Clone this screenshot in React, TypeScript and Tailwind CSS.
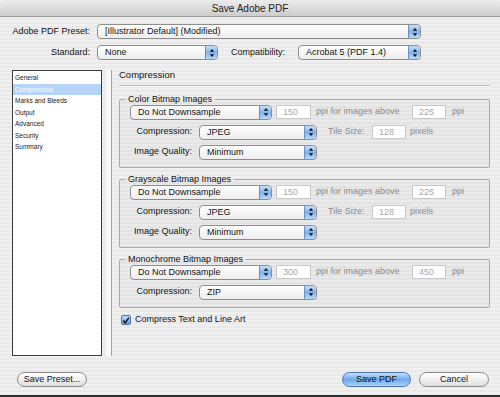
import React from 'react';

const stripes =
  'bg-[repeating-linear-gradient(180deg,#f0f0f0_0px,#f0f0f0_2px,#e9e9e9_2px,#e9e9e9_4px)]';

const Stepper: React.FC = () => (
  <span className="flex h-full w-[12px] shrink-0 items-center justify-center rounded-r-[4px] border-l border-[#6a8fc0] bg-gradient-to-b from-[#c6e0fb] via-[#7fb3ea] to-[#b7d8fa]">
    <svg width="6" height="10" viewBox="0 0 6 10">
      <path d="M3 1 L5.2 3.8 L0.8 3.8 Z" fill="#111" />
      <path d="M3 9 L5.2 6.2 L0.8 6.2 Z" fill="#111" />
    </svg>
  </span>
);

interface PopupProps {
  value: string;
  width: string;
}

const Popup: React.FC<PopupProps> = ({ value, width }) => (
  <div
    className={`flex h-[15px] shrink-0 items-stretch overflow-hidden rounded-[4px] border border-[#8d8d8d] bg-gradient-to-b from-white to-[#eeeeee] ${width}`}
  >
    <span className="flex-1 truncate pl-[7px] leading-[13px] text-[#111]">{value}</span>
    <Stepper />
  </div>
);

const Field: React.FC<{ value: string; width: string }> = ({ value, width }) => (
  <div
    className={`h-[14px] shrink-0 border border-[#c9c9c9] bg-white pl-[6px] leading-[12px] text-[#a8a8a8] ${width}`}
  >
    {value}
  </div>
);

const Label: React.FC<{ children: React.ReactNode }> = ({ children }) => (
  <span className="w-[62px] shrink-0 text-right text-[#111]">{children}</span>
);

interface GroupProps {
  title: string;
  minPpi: string;
  abovePpi: string;
  compression: string;
  hasTile?: boolean;
  hasQuality?: boolean;
  className?: string;
}

const Group: React.FC<GroupProps> = ({
  title,
  minPpi,
  abovePpi,
  compression,
  hasTile = true,
  hasQuality = true,
  className = '',
}) => (
  <fieldset
    className={`min-w-0 rounded-[2px] border border-[#a9a9a9] bg-black/[0.025] px-[10px] pb-[5px] ${className}`}
  >
    <legend className="-ml-[5px] h-[6px] px-[3px] leading-[6px] text-[#111]">{title}</legend>
    <div className="flex h-[20px] items-center">
      <Popup value="Do Not Downsample" width="w-[142px]" />
      <Field value={minPpi} width="ml-[4px] w-[35px]" />
      <span className="ml-[5px] w-[96px] shrink-0 text-[#8a8a8a]">ppi for images above</span>
      <Field value={abovePpi} width="w-[34px]" />
      <span className="ml-[6px] text-[#8a8a8a]">ppi</span>
    </div>
    <div className="flex h-[20px] items-center">
      <Label>Compression:</Label>
      <span className="ml-[7px]">
        <Popup value={compression} width="w-[118px]" />
      </span>
      {hasTile && (
        <>
          <span className="ml-[11px] w-[44px] shrink-0 text-[#8a8a8a]">Tile Size:</span>
          <Field value="128" width="w-[34px]" />
          <span className="ml-[4px] text-[#8a8a8a]">pixels</span>
        </>
      )}
    </div>
    {hasQuality && (
      <div className="flex h-[20px] items-center">
        <Label>Image Quality:</Label>
        <span className="ml-[7px]">
          <Popup value="Minimum" width="w-[118px]" />
        </span>
      </div>
    )}
  </fieldset>
);

const sections = [
  'General',
  'Compression',
  'Marks and Bleeds',
  'Output',
  'Advanced',
  'Security',
  'Summary',
];

export default function App() {
  return (
    <div
      className={`flex h-[397px] w-[500px] flex-col overflow-hidden border-b-2 border-[#2e2e2e] font-['Liberation_Sans',Arial,sans-serif] text-[9px] text-[#111] ${stripes}`}
    >
      {/* title bar */}
      <div className="flex h-[17px] shrink-0 items-center justify-center rounded-t-[5px] border-b border-[#9a9a9a] bg-gradient-to-b from-[#ececec] to-[#cdcdcd] text-[10px] text-[#222]">
        Save Adobe PDF
      </div>

      {/* preset rows */}
      <div className="mt-[7px] flex h-[15px] items-center pl-[11px]">
        <span className="w-[79px] text-right">Adobe PDF Preset:</span>
        <span className="ml-[7px]">
          <Popup value="[Illustrator Default] (Modified)" width="w-[324px]" />
        </span>
      </div>
      <div className="mt-[6px] flex h-[15px] items-center pl-[11px]">
        <span className="w-[79px] text-right">Standard:</span>
        <span className="ml-[7px]">
          <Popup value="None" width="w-[121px]" />
        </span>
        <span className="ml-[13px] w-[67px] shrink-0">Compatibility:</span>
        <Popup value="Acrobat 5 (PDF 1.4)" width="w-[123px]" />
      </div>

      {/* main area */}
      <div className="mt-[10px] flex h-[286px] shrink-0 pl-[12px]">
        <div className="flex w-[90px] shrink-0 flex-col border border-[#3c3c3c] bg-white pt-[1px] text-[6.5px] leading-[11.5px]">
          {sections.map((s) => (
            <div
              key={s}
              className={`pl-[2px] ${s === 'Compression' ? 'bg-[#b6d4f7] text-white' : 'text-[#222]'}`}
            >
              {s}
            </div>
          ))}
        </div>
        <div className="ml-[4px] w-[5px] shrink-0 bg-[#f8f8f8]" />
        <div className="flex min-w-0 flex-1 flex-col border-l border-[#a2a2a2] pl-[7px] pr-[10px]">
          <div className="-mt-[1px] h-[12px] text-[9.5px] leading-[12px]">Compression</div>
          <div className="mt-[4px] h-[2px] border-t border-b border-t-[#b4b4b4] border-b-white" />

          <Group title="Color Bitmap Images" minPpi="150" abovePpi="225" compression="JPEG" className="mt-[9px]" />
          <Group title="Grayscale Bitmap Images" minPpi="150" abovePpi="225" compression="JPEG" className="mt-[8px]" />
          <Group
            title="Monochrome Bitmap Images"
            minPpi="300"
            abovePpi="450"
            compression="ZIP"
            hasTile={false}
            hasQuality={false}
            className="mt-[8px]"
          />

          <div className="mt-[5px] flex h-[14px] items-center pl-[2px]">
            <span className="flex h-[10px] w-[10px] items-center justify-center rounded-[2px] border border-[#4f78ad] bg-gradient-to-b from-[#bcdcfb] to-[#5c9ce3]">
              <svg width="9" height="9" viewBox="0 0 9 9">
                <path d="M1.5 4.5 L3.6 7 L7.8 1.2" fill="none" stroke="#111" strokeWidth="1.6" />
              </svg>
            </span>
            <span className="ml-[4px]">Compress Text and Line Art</span>
          </div>
        </div>
      </div>

      {/* buttons */}
      <div className="mt-[16px] flex h-[15px] items-center pl-[17px] pr-[11px]">
        <button className="h-[15px] w-[70px] rounded-full border border-[#8a8a8a] bg-gradient-to-b from-white via-[#f1f1f1] to-[#dedede] leading-[13px] text-[#111]">
          Save Preset...
        </button>
        <div className="flex-1" />
        <button className="h-[15px] w-[69px] rounded-full border border-[#4b76ad] bg-gradient-to-b from-[#c4e0fb] via-[#6fa9ea] to-[#a9d2fa] leading-[13px] text-[#111]">
          Save PDF
        </button>
        <button className="ml-[8px] h-[15px] w-[70px] rounded-full border border-[#8a8a8a] bg-gradient-to-b from-white via-[#f1f1f1] to-[#dedede] leading-[13px] text-[#111]">
          Cancel
        </button>
      </div>
    </div>
  );
}
